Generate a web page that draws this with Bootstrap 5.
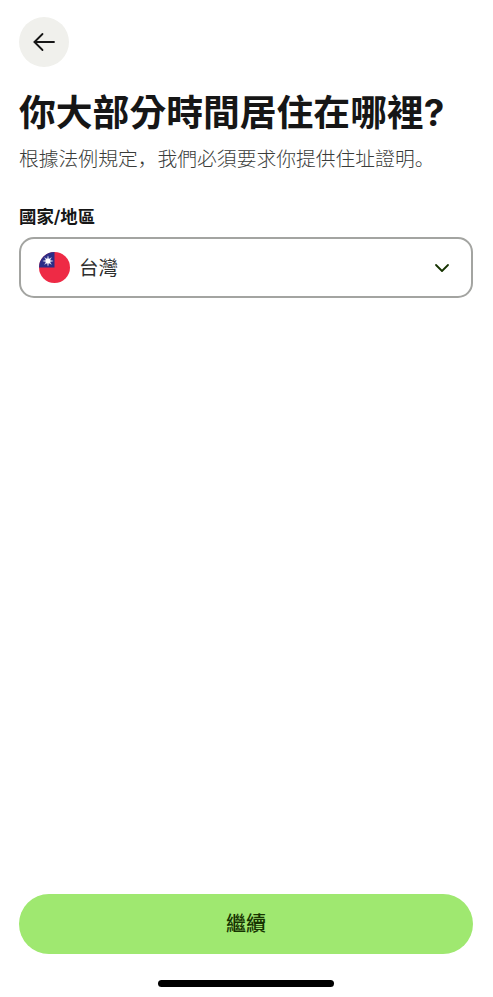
<!DOCTYPE html>
<html lang="zh-Hant">
<head>
<meta charset="utf-8">
<title>國家/地區</title>
<link href="https://cdn.jsdelivr.net/npm/bootstrap@5.3.0/dist/css/bootstrap.min.css" rel="stylesheet">
<style>
html, body { height: 100%; }
body { font-family: "Inter", "Noto Sans CJK TC", sans-serif; background: #fff; color: #161616; }
.screen { height: 997px; padding: 17px 20px 0 19px; }
.back-btn { width: 50px; height: 50px; background: #f0f0ec; color: #161616; }
.page-title { font-size: 36.8px; line-height: 44px; font-weight: 700; margin: 24px 0 0; letter-spacing: 0; white-space: nowrap; color: #161616; }
.page-sub { font-size: 19.8px; line-height: 30px; margin: 9px 0 0; color: #3a3c3a; white-space: nowrap; font-weight: 300; }
.punct { font-family: "Noto Sans CJK SC", sans-serif; line-height: 0; }
.field-label { font-size: 17.4px; line-height: 22px; font-weight: 600; margin: 32px 0 9px; display: block; color: #161616; }
.country-select { height: 61px; border: 2px solid #a3a4a1; border-radius: 15px; padding: 0 21px 0 18px; background: #fff; }
.country-name { font-size: 19.5px; line-height: 26px; color: #2e2e2e; margin-left: 9px; }
.primary-pill { height: 60px; background: #9fe870; color: #163300; border: 0; border-radius: 30px; font-size: 20px; font-weight: 500; }
.primary-pill:hover, .primary-pill:active { background: #9fe870 !important; color: #163300 !important; }
.home-bar { width: 176px; height: 7px; border-radius: 4px; background: #000; margin: 26px auto 10px; }
</style>
</head>
<body>
<div class="screen d-flex flex-column">
  <button type="button" class="btn back-btn rounded-circle d-flex align-items-center justify-content-center p-0" aria-label="返回">
    <svg width="24" height="24" viewBox="0 0 24 24" fill="none" stroke="currentColor" stroke-width="1.800" stroke-linecap="round" stroke-linejoin="round"><path d="M22 12H2.500"/><path d="M10.500 4 2.500 12l8 8"/></svg>
  </button>
  <h1 class="page-title">你大部分時間居住在哪裡?</h1>
  <p class="page-sub">根據法例規定<span class="punct" lang="zh-Hans">&#xFF0C;</span>我們必須要求你提供住址證明<span class="punct" lang="zh-Hans">。</span></p>
  <label class="field-label">國家/地區</label>
  <div class="country-select d-flex align-items-center">
    <svg width="31" height="31" viewBox="0 0 31 31" aria-hidden="true">
      <defs><clipPath id="flagclip"><circle cx="15.500" cy="15.500" r="15.500"/></clipPath></defs>
      <g clip-path="url(#flagclip)">
        <rect width="31" height="31" fill="#ee2a45"/>
        <rect width="15.500" height="15.500" fill="#2b2d87"/>
        <polygon fill="#fff" points="9,3.500 10,6.700 12.700,5.300 11.300,8 14.500,9 11.300,10 12.700,12.700 10,11.300 9,14.500 8,11.300 5.300,12.700 6.700,10 3.500,9 6.700,8 5.300,5.300 8,6.700"/>
        <circle cx="9" cy="9" r="3.100" fill="#fff" stroke="#2b2d87" stroke-width=".5"/>
      </g>
    </svg>
    <span class="country-name">台灣</span>
    <svg class="ms-auto" width="16" height="10" viewBox="0 0 16 10" fill="none" stroke="#163300" stroke-width="1.800" stroke-linecap="round" stroke-linejoin="round"><path d="M2 2l6 6 6-6"/></svg>
  </div>
  <div class="mt-auto">
    <button type="button" class="btn primary-pill w-100">繼續</button>
    <div class="home-bar"></div>
  </div>
</div>
<script src="https://cdn.jsdelivr.net/npm/bootstrap@5.3.0/dist/js/bootstrap.bundle.min.js"></script>
</body>
</html>
